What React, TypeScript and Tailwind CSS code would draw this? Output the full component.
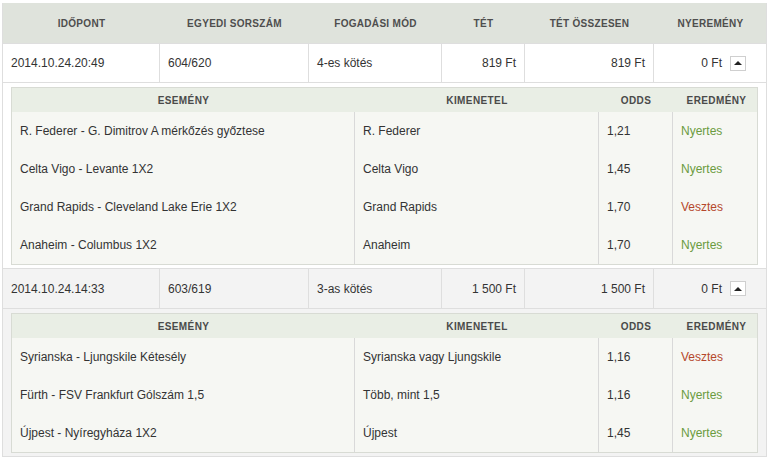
type Leg = {
  event: string;
  outcome: string;
  odds: string;
  won: boolean;
};

type Bet = {
  time: string;
  serial: string;
  type: string;
  stake: string;
  total: string;
  win: string;
  legs: Leg[];
  stripe: boolean;
};

const bets: Bet[] = [
  {
    time: "2014.10.24.20:49",
    serial: "604/620",
    type: "4-es kötés",
    stake: "819 Ft",
    total: "819 Ft",
    win: "0 Ft",
    stripe: false,
    legs: [
      { event: "R. Federer - G. Dimitrov A mérkőzés győztese", outcome: "R. Federer", odds: "1,21", won: true },
      { event: "Celta Vigo - Levante 1X2", outcome: "Celta Vigo", odds: "1,45", won: true },
      { event: "Grand Rapids - Cleveland Lake Erie 1X2", outcome: "Grand Rapids", odds: "1,70", won: false },
      { event: "Anaheim - Columbus 1X2", outcome: "Anaheim", odds: "1,70", won: true },
    ],
  },
  {
    time: "2014.10.24.14:33",
    serial: "603/619",
    type: "3-as kötés",
    stake: "1 500 Ft",
    total: "1 500 Ft",
    win: "0 Ft",
    stripe: true,
    legs: [
      { event: "Syrianska - Ljungskile Kétesély", outcome: "Syrianska vagy Ljungskile", odds: "1,16", won: false },
      { event: "Fürth - FSV Frankfurt Gólszám 1,5", outcome: "Több, mint 1,5", odds: "1,16", won: true },
      { event: "Újpest - Nyíregyháza 1X2", outcome: "Újpest", odds: "1,45", won: true },
    ],
  },
];

const mainCols = "grid grid-cols-[157px_149px_133px_83px_129px_113px]";
const legCols = "grid grid-cols-[343px_244px_74px_87px]";

function BetRow({ bet }: { bet: Bet }) {
  const bg = bet.stripe ? "bg-[#f3f3f3]" : "bg-white";
  const rowH = bet.stripe ? "h-[40px]" : "h-[39px]";

  return (
    <div className={bg}>
      <div className={`${mainCols} ${rowH} border-b border-[#dedede] text-[12px] text-[#333]`}>
        <div className="flex items-center border-r border-[#dedede] pl-2">{bet.time}</div>
        <div className="flex items-center border-r border-[#dedede] pl-2">{bet.serial}</div>
        <div className="flex items-center border-r border-[#dedede] pl-2">{bet.type}</div>
        <div className="flex items-center justify-end border-r border-[#dedede] pr-2">{bet.stake}</div>
        <div className="flex items-center justify-end border-r border-[#dedede] pr-2">{bet.total}</div>
        <div className="flex items-center justify-end pr-[21px]">
          <span>{bet.win}</span>
          <button className="ml-[8px] flex h-[15px] w-[16px] items-center justify-center border border-[#cfcfcf] bg-white">
            <span className="h-0 w-0 border-x-[4px] border-b-[4px] border-x-transparent border-b-[#222]" />
          </button>
        </div>
      </div>

      <div className="border-b border-[#dedede] px-2 pt-1 pb-[3px]">
        <div className="border border-[#d8dbd4] bg-[#f6f7f3]">
          <div className={`${legCols} h-[24px] items-center bg-[#e9eee5] text-[10px] font-bold uppercase tracking-[0.4px] text-[#4a4a4a]`}>
            <div className="text-center">Esemény</div>
            <div className="text-center">Kimenetel</div>
            <div className="text-center">Odds</div>
            <div className="text-center">Eredmény</div>
          </div>
          {bet.legs.map((leg) => (
            <div key={leg.event} className={`${legCols} h-[38px] text-[12px] text-[#333]`}>
              <div className="flex items-center border-r border-[#d9d9d9] pl-2">{leg.event}</div>
              <div className="flex items-center border-r border-[#d9d9d9] pl-2">{leg.outcome}</div>
              <div className="flex items-center border-r border-[#d9d9d9] pl-2">{leg.odds}</div>
              <div
                className={`flex items-center pl-2 ${leg.won ? "text-[#6b9b40]" : "text-[#b5482c]"}`}
              >
                {leg.won ? "Nyertes" : "Vesztes"}
              </div>
            </div>
          ))}
        </div>
      </div>
    </div>
  );
}

export default function App() {
  return (
    <div className="min-h-[459px] bg-white pt-[3px] font-[family-name:'Liberation_Sans',Arial,sans-serif]">
      <div className="ml-[2px] w-[765px] border-x border-[#dedede]">
        <div className={`${mainCols} h-[41px] items-center border-b border-[#dedede] bg-[#dfe3dc] text-[10px] font-bold uppercase tracking-[0.3px] text-[#4e4e4e]`}>
          <div className="text-center">Időpont</div>
          <div className="text-center">Egyedi sorszám</div>
          <div className="text-center">Fogadási mód</div>
          <div className="text-center">Tét</div>
          <div className="text-center">Tét összesen</div>
          <div className="text-center">Nyeremény</div>
        </div>
        {bets.map((bet) => (
          <BetRow key={bet.serial} bet={bet} />
        ))}
      </div>
    </div>
  );
}
